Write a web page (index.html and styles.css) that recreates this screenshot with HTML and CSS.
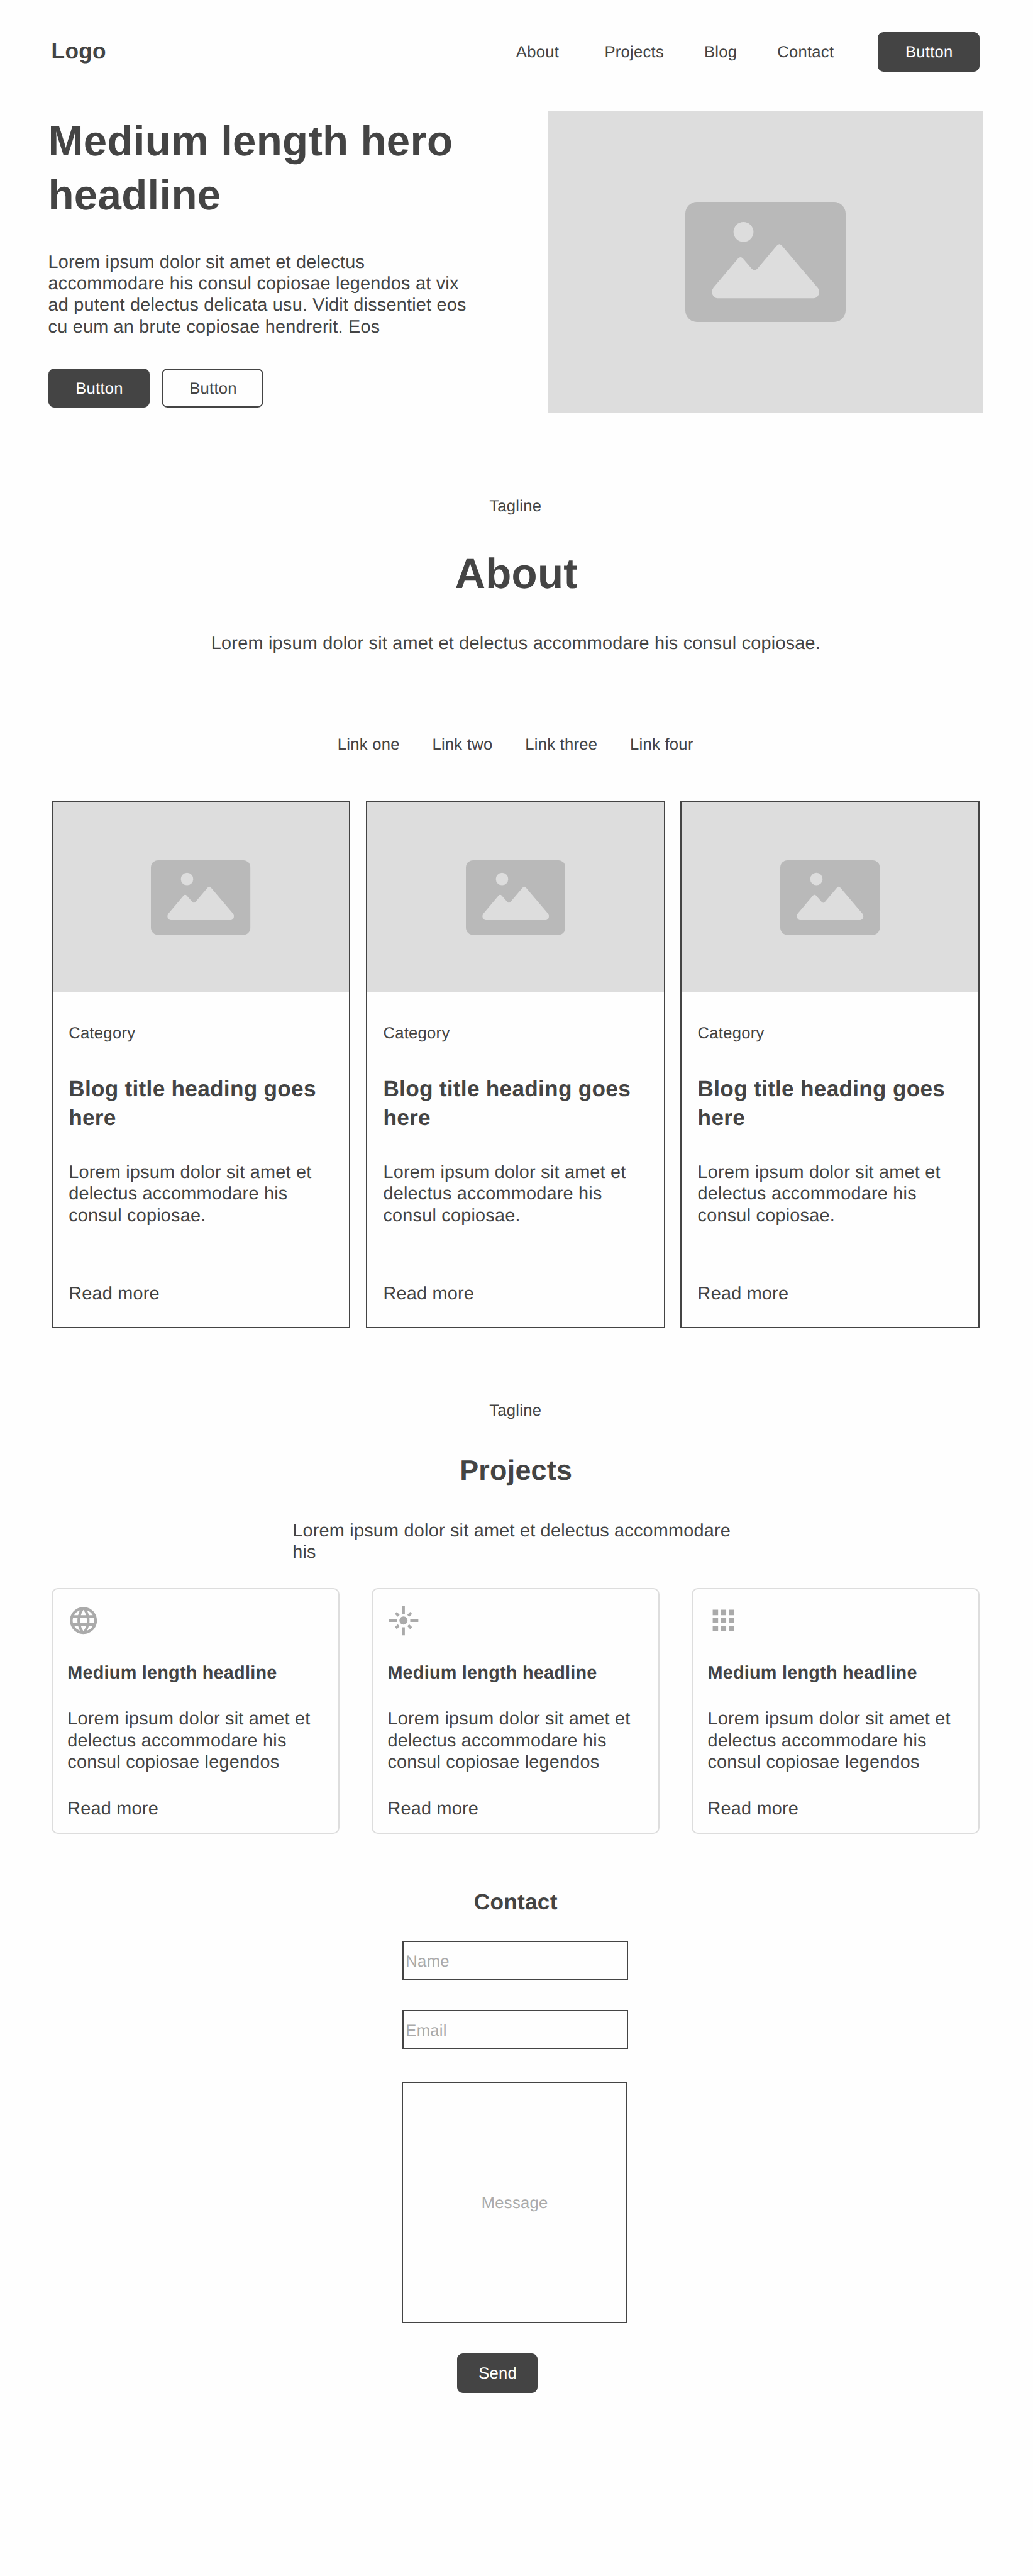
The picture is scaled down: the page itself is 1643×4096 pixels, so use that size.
FILE: index.html
```html
<!DOCTYPE html>
<html lang="en">
<head>
<meta charset="utf-8">
<title>Logo</title>
<link rel="stylesheet" href="styles.css">
</head>
<body>
<svg class="sprite" width="0" height="0" aria-hidden="true">
  <symbol id="picture" viewBox="0 0 318 238">
    <rect width="318" height="238" rx="23" fill="#b9b9b9"/>
    <circle cx="115.4" cy="59.6" r="19.8" fill="#ddd"/>
    <path fill="#ddd" d="M55.7 170L104.3 112.5Q109.4 107 114.6 112.5L132 132.8Q137.3 138 142.6 132.8L181 87.3Q186.4 80.5 192 87.3L263.3 171Q267 177 264.5 184Q261 191 255 191L64 191Q57 191 54 184Q51 176.5 55.7 170Z"/>
  </symbol>
</svg>
<div class="page">
  <header class="header">
    <a class="logo">Logo</a>
    <nav class="nav">
      <a class="nav-about">About</a>
      <a>Projects</a>
      <a>Blog</a>
      <a>Contact</a>
    </nav>
    <a class="button">Button</a>
  </header>

  <section class="hero">
    <div class="hero-copy">
      <h1 class="display">Medium length hero headline</h1>
      <p class="body hero-text">Lorem ipsum dolor sit amet et delectus accommodare his consul copiosae legendos at vix ad putent delectus delicata usu. Vidit dissentiet eos cu eum an brute copiosae hendrerit. Eos</p>
      <div class="actions">
        <a class="button">Button</a>
        <a class="button button-outline">Button</a>
      </div>
    </div>
    <div class="picture hero-picture"><svg class="picture-icon"><use href="#picture"/></svg></div>
  </section>

  <section class="about">
    <p class="small">Tagline</p>
    <h2 class="display about-title">About</h2>
    <p class="body about-text">Lorem ipsum dolor sit amet et delectus accommodare his consul copiosae.</p>
    <div class="links">
      <a>Link one</a>
      <a>Link two</a>
      <a>Link three</a>
      <a>Link four</a>
    </div>
    <div class="posts">
      <article class="post">
        <div class="picture post-picture"><svg class="picture-icon"><use href="#picture"/></svg></div>
        <div class="post-content">
          <p class="small">Category</p>
          <h3 class="title post-title">Blog title heading goes here</h3>
          <p class="body">Lorem ipsum dolor sit amet et delectus accommodare his consul copiosae.</p>
          <a class="body post-more">Read more</a>
        </div>
      </article>
      <article class="post">
        <div class="picture post-picture"><svg class="picture-icon"><use href="#picture"/></svg></div>
        <div class="post-content">
          <p class="small">Category</p>
          <h3 class="title post-title">Blog title heading goes here</h3>
          <p class="body">Lorem ipsum dolor sit amet et delectus accommodare his consul copiosae.</p>
          <a class="body post-more">Read more</a>
        </div>
      </article>
      <article class="post">
        <div class="picture post-picture"><svg class="picture-icon"><use href="#picture"/></svg></div>
        <div class="post-content">
          <p class="small">Category</p>
          <h3 class="title post-title">Blog title heading goes here</h3>
          <p class="body">Lorem ipsum dolor sit amet et delectus accommodare his consul copiosae.</p>
          <a class="body post-more">Read more</a>
        </div>
      </article>
    </div>
  </section>

  <section class="projects">
    <p class="small">Tagline</p>
    <h2 class="projects-title">Projects</h2>
    <p class="body projects-text">Lorem ipsum dolor sit amet et delectus accommodare his</p>
    <div class="features">
      <article class="feature">
        <svg class="feature-icon" viewBox="0 0 24 24"><path d="M11.99 2C6.47 2 2 6.48 2 12s4.47 10 9.99 10C17.52 22 22 17.52 22 12S17.52 2 11.99 2zm6.93 6h-2.95c-.32-1.25-.78-2.45-1.38-3.56 1.84.63 3.37 1.91 4.33 3.56zM12 4.04c.83 1.2 1.48 2.53 1.91 3.96h-3.82c.43-1.43 1.08-2.76 1.91-3.96zM4.26 14C4.1 13.36 4 12.69 4 12s.1-1.36.26-2h3.38c-.08.66-.14 1.32-.14 2 0 .68.06 1.34.14 2H4.26zm.82 2h2.95c.32 1.25.78 2.45 1.38 3.56-1.84-.63-3.37-1.9-4.33-3.56zm2.95-8H5.08c.96-1.66 2.49-2.93 4.33-3.56C8.81 5.55 8.35 6.75 8.03 8zM12 19.96c-.83-1.2-1.48-2.53-1.91-3.96h3.82c-.43 1.43-1.08 2.76-1.91 3.96zM14.34 14H9.66c-.09-.66-.16-1.32-.16-2 0-.68.07-1.35.16-2h4.68c.09.65.16 1.32.16 2 0 .68-.07 1.34-.16 2zm.25 5.56c.6-1.11 1.06-2.31 1.38-3.56h2.95c-.96 1.65-2.49 2.93-4.33 3.56zM16.36 14c.08-.66.14-1.32.14-2 0-.68-.06-1.34-.14-2h3.38c.16.64.26 1.31.26 2s-.1 1.36-.26 2h-3.38z"/></svg>
        <h3 class="feature-title">Medium length headline</h3>
        <p class="body">Lorem ipsum dolor sit amet et delectus accommodare his consul copiosae legendos</p>
        <a class="body feature-more">Read more</a>
      </article>
      <article class="feature">
        <svg class="feature-icon" viewBox="0 0 24 24"><path d="M7 11H1v2h6v-2zm2.17-3.24L7.05 5.64 5.64 7.05l2.12 2.12 1.41-1.41zM13 1h-2v6h2V1zm5.36 6.05l-1.41-1.41-2.12 2.12 1.41 1.41 2.12-2.12zM17 11v2h6v-2h-6zm-5-2c-1.66 0-3 1.34-3 3s1.34 3 3 3 3-1.34 3-3-1.34-3-3-3zm2.83 7.24l2.12 2.12 1.41-1.41-2.12-2.12-1.41 1.41zm-9.19.71l1.41 1.41 2.12-2.12-1.41-1.41-2.12 2.12zM11 23h2v-6h-2v6z"/></svg>
        <h3 class="feature-title">Medium length headline</h3>
        <p class="body">Lorem ipsum dolor sit amet et delectus accommodare his consul copiosae legendos</p>
        <a class="body feature-more">Read more</a>
      </article>
      <article class="feature">
        <svg class="feature-icon" viewBox="0 0 24 24"><path d="M4 8h4V4H4v4zm6 12h4v-4h-4v4zm-6 0h4v-4H4v4zm0-6h4v-4H4v4zm6 0h4v-4h-4v4zm6-10v4h4V4h-4zm-6 4h4V4h-4v4zm6 6h4v-4h-4v4zm0 6h4v-4h-4v4z"/></svg>
        <h3 class="feature-title">Medium length headline</h3>
        <p class="body">Lorem ipsum dolor sit amet et delectus accommodare his consul copiosae legendos</p>
        <a class="body feature-more">Read more</a>
      </article>
    </div>
  </section>

  <section class="contact">
    <h2 class="title contact-title">Contact</h2>
    <div class="field">Name</div>
    <div class="field field-email">Email</div>
    <div class="field field-message">Message</div>
    <a class="button button-send">Send</a>
  </section>
</div>
</body>
</html>
```
FILE: styles.css
```css
* {
  box-sizing: border-box;
}

body {
  margin: 0;
  background: #fefefe;
  color: #444;
  font-family: "Liberation Sans", Arial, Helvetica, sans-serif;
  font-size: 25.62px;
  line-height: 30px;
  letter-spacing: 0.27px;
  text-rendering: geometricPrecision;
}

h1, h2, h3, p {
  margin: 0;
}

.sprite {
  display: block;
}

.page {
  width: 1643px;
  height: 4096px;
  padding: 51.2px 85.2px 0 81.6px;
}

/* Text styles */
.display {
  font-size: 67.26px;
  line-height: 85.75px;
}

.title {
  font-size: 35.23px;
  line-height: 46px;
}

.body {
  display: block;
  font-size: 28.82px;
  line-height: 34.32px;
  letter-spacing: 0.23px;
}

/* Buttons */
.button {
  display: flex;
  align-items: center;
  justify-content: center;
  width: 161.6px;
  height: 62.4px;
  padding: 2px 0 0 1.5px;
  border: 2px solid #444;
  border-radius: 9px;
  background: #444;
  color: #fff;
}

.button-outline {
  background: none;
  color: #444;
}

/* Image placeholders */
.picture {
  display: flex;
  align-items: center;
  justify-content: center;
  background: #ddd;
}

.picture-icon {
  display: block;
  width: 255px;
  height: 191px;
}

/* Header */
.header {
  display: flex;
  align-items: center;
  height: 62.4px;
}

.logo {
  margin-bottom: 0.6px;
  font-size: 35.23px;
  font-weight: bold;
  line-height: 40px;
}

.nav {
  display: flex;
  gap: 63.9px;
  margin-left: auto;
  margin-right: 69.9px;
  padding-top: 1.6px;
}

.nav-about {
  margin-right: 8.4px;
}

/* Hero */
.hero {
  display: flex;
  justify-content: space-between;
  margin-top: 62.5px;
  margin-left: -5.1px;
  margin-right: -5.1px;
}

.hero-copy {
  width: 680px;
  padding-top: 6.4px;
}

.hero-text {
  margin-top: 45.6px;
}

.actions {
  display: flex;
  gap: 19.4px;
  margin-top: 49.2px;
}

.hero-picture {
  width: 691.5px;
  height: 480.7px;
}

/* About */
.about {
  display: flex;
  flex-direction: column;
  align-items: center;
  padding-top: 133.6px;
}

.about-title {
  margin-top: 50px;
  padding-left: 3px;
}

.about-text {
  margin-top: 49.5px;
  padding-left: 1.5px;
}

.links {
  display: flex;
  gap: 51.7px;
  margin-top: 128.6px;
}

.posts {
  display: grid;
  grid-template-columns: repeat(3, 1fr);
  gap: 24.4px;
  width: 100%;
  margin-top: 75.9px;
}

.post {
  height: 837.5px;
  border: 2px solid #444;
}

.post-picture {
  height: 300.8px;
}

.post-picture .picture-icon {
  width: 158.4px;
  height: 118.5px;
}

.post-content {
  padding: 50.6px 24.8px 0 25.6px;
}

.post-title {
  margin-top: 50.8px;
  margin-bottom: 46.4px;
}

.post-more {
  margin-top: 90.3px;
}

/* Projects */
.projects {
  display: flex;
  flex-direction: column;
  align-items: center;
  padding-top: 116.5px;
}

.projects-title {
  margin-top: 52.3px;
  padding-left: 2px;
  font-size: 44.84px;
  line-height: 54px;
}

.projects-text {
  width: 709px;
  margin-top: 51.9px;
}

.features {
  display: grid;
  grid-template-columns: repeat(3, 1fr);
  gap: 51.1px;
  width: 100%;
  margin-top: 40px;
}

.feature {
  height: 391px;
  padding: 23.3px 23.3px 23.3px 23.7px;
  border: 2px solid #ddd;
  border-radius: 10px;
}

.feature-icon {
  display: block;
  width: 51.5px;
  height: 51.5px;
  fill: #aaa;
}

.feature-title {
  margin: 37.7px 0 36.6px;
  font-size: 28.82px;
  line-height: 40px;
  letter-spacing: 0.23px;
}

.feature-more {
  margin-top: 39.5px;
}

/* Contact */
.contact {
  display: flex;
  flex-direction: column;
  align-items: center;
  padding-top: 86.2px;
}

.contact-title {
  margin-bottom: 37.2px;
  padding-left: 1px;
}

.field {
  display: flex;
  align-items: center;
  width: 358.7px;
  height: 62.4px;
  padding: 4px 0 0 3px;
  border: 2px solid #444;
  color: #aaa;
}

.field-email {
  margin-top: 48px;
}

.field-message {
  justify-content: center;
  height: 384.2px;
  margin-top: 51.3px;
  margin-right: 3.2px;
  padding: 2px 0 0 1px;
}

.button-send {
  width: 127.9px;
  margin-top: 48.3px;
  margin-right: 57.6px;
}
```
